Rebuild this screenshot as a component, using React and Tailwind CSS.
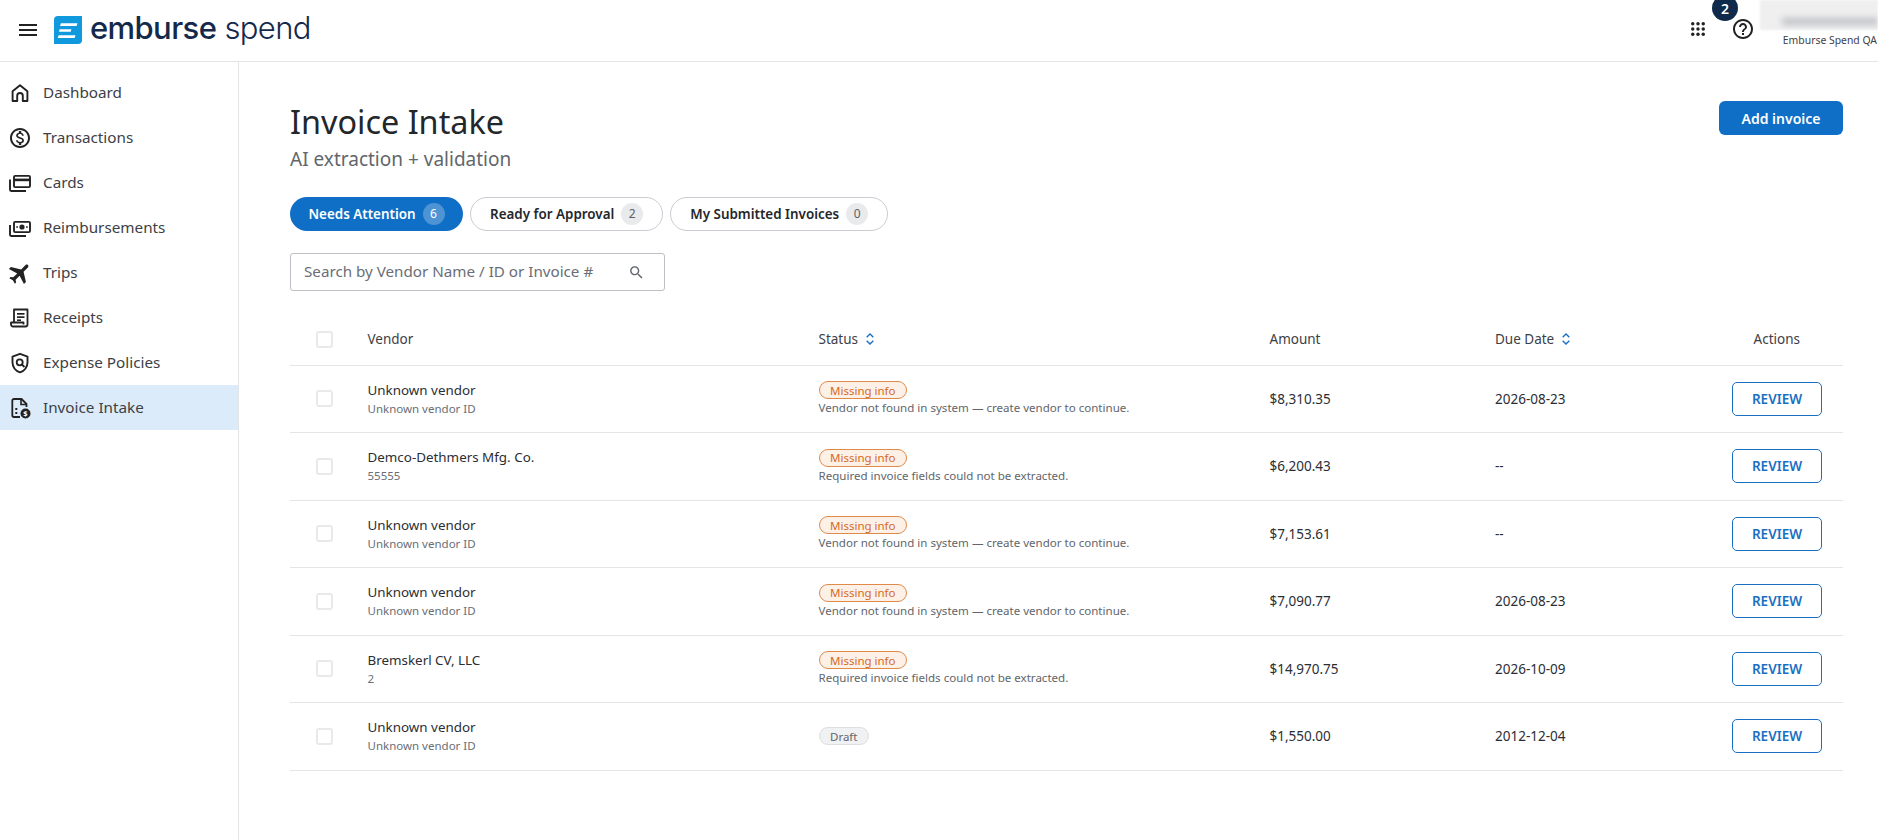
import { useState } from "react"

const font = { fontFamily: '"Noto Sans", sans-serif' }

const rows = [
  { vendor: "Unknown vendor", id: "Unknown vendor ID", status: "Missing info", note: "Vendor not found in system — create vendor to continue.", amount: "$8,310.35", due: "2026-08-23" },
  { vendor: "Demco-Dethmers Mfg. Co.", id: "55555", status: "Missing info", note: "Required invoice fields could not be extracted.", amount: "$6,200.43", due: "--" },
  { vendor: "Unknown vendor", id: "Unknown vendor ID", status: "Missing info", note: "Vendor not found in system — create vendor to continue.", amount: "$7,153.61", due: "--" },
  { vendor: "Unknown vendor", id: "Unknown vendor ID", status: "Missing info", note: "Vendor not found in system — create vendor to continue.", amount: "$7,090.77", due: "2026-08-23" },
  { vendor: "Bremskerl CV, LLC", id: "2", status: "Missing info", note: "Required invoice fields could not be extracted.", amount: "$14,970.75", due: "2026-10-09" },
  { vendor: "Unknown vendor", id: "Unknown vendor ID", status: "Draft", note: "", amount: "$1,550.00", due: "2012-12-04" },
]

/* ---------------- Icons ---------------- */
function Icon({ children, className = "w-6 h-6" }) {
  return (
    <svg viewBox="0 0 24 24" className={className} fill="#222" aria-hidden="true">
      {children}
    </svg>
  )
}

const HomeIcon = () => (
  <Icon>
    <path d="M4.6 20V10.2L12 4.2l7.4 6V20h-4.6v-5.2a2.8 2.8 0 0 0-5.6 0V20z" fill="none" stroke="#222" strokeWidth="1.9" strokeLinejoin="round" />
  </Icon>
)
const DollarIcon = () => (
  <Icon>
    <path d="M12 2C6.48 2 2 6.48 2 12s4.48 10 10 10 10-4.48 10-10S17.52 2 12 2zm0 18c-4.41 0-8-3.59-8-8s3.59-8 8-8 8 3.59 8 8-3.59 8-8 8zm.31-8.86c-1.77-.45-2.34-.94-2.34-1.67 0-.84.79-1.43 2.1-1.43 1.38 0 1.9.66 1.94 1.64h1.71c-.05-1.34-.87-2.57-2.49-2.97V5H10.9v1.69c-1.51.32-2.72 1.3-2.72 2.81 0 1.79 1.49 2.69 3.66 3.21 1.95.46 2.34 1.15 2.34 1.87 0 .53-.39 1.39-2.1 1.39-1.6 0-2.23-.72-2.32-1.64H8.04c.1 1.7 1.36 2.66 2.86 2.97V19h2.34v-1.67c1.52-.29 2.72-1.16 2.73-2.77-.01-2.2-1.9-2.96-3.66-3.42z" />
  </Icon>
)
const CardsIcon = () => (
  <Icon>
    <path d="M2 8.5v10.3c0 .7.5 1.2 1.2 1.2H18" fill="none" stroke="#222" strokeWidth="1.9" />
    <rect x="6" y="4.9" width="16" height="11.2" rx="1.2" fill="none" stroke="#222" strokeWidth="1.9" />
    <rect x="6" y="7.6" width="16" height="2.6" />
  </Icon>
)
const CashIcon = () => (
  <Icon>
    <path d="M2 9v9.8c0 .7.5 1.2 1.2 1.2H18" fill="none" stroke="#222" strokeWidth="1.9" />
    <rect x="6" y="5.9" width="16" height="10.2" rx="1.2" fill="none" stroke="#222" strokeWidth="1.9" />
    <circle cx="14" cy="11" r="2.6" />
    <rect x="8.3" y="10.2" width="1.6" height="1.6" />
    <rect x="18.1" y="10.2" width="1.6" height="1.6" />
  </Icon>
)
const FlightIcon = () => (
  <Icon>
    <path transform="rotate(45 12 12) translate(12 12) scale(1.12 1.12) translate(-12 -12)" d="M21.5 16.5V14l-8-5V3.5C13.5 2.67 12.83 2 12 2s-1.5.67-1.5 1.5V9l-8 5v2.5l8-2.5v5l-2 1.5V22l3.500-1 3.500 1v-1.500l-2-1.500v-5z" />
  </Icon>
)
const ReceiptIcon = () => (
  <Icon>
    <path d="M6 16.5V3.5h13.5V18.5a2 2 0 0 1-2 2H5a2 2 0 0 1-2-2v-2h12.5v2" fill="none" stroke="#222" strokeWidth="1.8" strokeLinejoin="round" />
    <rect x="9" y="7" width="7.5" height="1.7" />
    <rect x="9" y="10.3" width="7.5" height="1.7" />
    <rect x="9" y="13.4" width="4" height="1.6" />
  </Icon>
)
const PolicyIcon = () => (
  <Icon>
    <path d="M12 2.8 4.5 5.6v5.9c0 4.6 3.1 8.7 7.5 9.8 4.4-1.1 7.5-5.2 7.5-9.8V5.6z" fill="none" stroke="#222" strokeWidth="1.9" strokeLinejoin="round" />
    <circle cx="11.7" cy="11.3" r="3" fill="none" stroke="#222" strokeWidth="1.8" />
    <path d="M13.8 13.5 16.5 16" stroke="#222" strokeWidth="1.8" fill="none" />
  </Icon>
)
const InvoiceIcon = () => (
  <Icon>
    <path d="M12 21H6a1.7 1.7 0 0 1-1.7-1.7V4.7A1.7 1.7 0 0 1 6 3h7.5l5 5v3" fill="none" stroke="#222" strokeWidth="1.8" strokeLinejoin="round" />
    <path d="M13 3.5v5h5" fill="none" stroke="#222" strokeWidth="1.6" />
    <rect x="7.3" y="12" width="2" height="2" />
    <rect x="7.3" y="16" width="2" height="2" />
    <circle cx="17.5" cy="17.5" r="5" />
    <text x="17.5" y="20.2" textAnchor="middle" fontSize="7.5" fontWeight="700" fill="#fff" style={font}>$</text>
  </Icon>
)

function SortIcon() {
  return (
    <svg viewBox="0 0 12 16" className="w-[10px] h-[14px] ml-[7px]" fill="none" stroke="#1b6fc2" strokeWidth="1.6">
      <path d="M2 6l4-4 4 4" />
      <path d="M2 10l4 4 4-4" />
    </svg>
  )
}

/* ---------------- Sidebar ---------------- */
const navItems = [
  ["Dashboard", HomeIcon],
  ["Transactions", DollarIcon],
  ["Cards", CardsIcon],
  ["Reimbursements", CashIcon],
  ["Trips", FlightIcon],
  ["Receipts", ReceiptIcon],
  ["Expense Policies", PolicyIcon],
  ["Invoice Intake", InvoiceIcon],
]

function Sidebar() {
  return (
    <aside className="w-[239px] shrink-0 border-r border-[#e3e5e8] pt-2">
      {navItems.map(([label, NavIcon]) => (
        <div
          key={label}
          className={
            "h-[45px] flex items-center pl-[8px] gap-[11px] text-[15.25px] text-[#3d4046] " +
            (label === "Invoice Intake" ? "bg-[#dcebf9]" : "")
          }
        >
          <NavIcon />
          <span className="mb-[1px]">{label}</span>
        </div>
      ))}
    </aside>
  )
}

/* ---------------- Header ---------------- */
function Header() {
  return (
    <header className="h-[62px] shrink-0 border-b border-[#e3e5e8] flex items-center relative">
      <svg viewBox="0 0 24 24" className="w-6 h-6 ml-[16px] mb-[1px]" fill="#222">
        <path d="M3 18h18v-2H3v2zm0-5h18v-2H3v2zm0-7v2h18V6H3z" />
      </svg>
      <svg viewBox="0 0 28 28" className="w-[28px] h-[28px] ml-[14px] mb-[2px]">
        <path d="M4 0h24v24a4 4 0 0 1-4 4H0V4a4 4 0 0 1 4-4z" fill="#1199dd" />
        <path d="M7 7.2h16.5l-.9 2.8H6zM5.7 13.3h11.7l-.7 2.4H4.9zM4.7 19.3h16.8l-.9 2.7H3.7z" fill="#fff" />
      </svg>
      <div className="ml-[8px] text-[31px] leading-none text-[#14294b] tracking-[-0.6px] pb-[7px]" style={{ fontFamily: '"Inter", sans-serif' }}>
        <span className="font-medium">emburse</span> <span className="font-light">spend</span>
      </div>

      <div className="ml-auto flex items-center h-full">
        <svg viewBox="0 0 24 24" className="w-[18px] h-[18px] mr-[24px] mb-[4px]" fill="#222">
          {[5, 12, 19].flatMap((y) => [5, 12, 19].map((x) => <circle key={x + "-" + y} cx={x} cy={y} r="2.3" />))}
        </svg>
        <svg viewBox="0 0 24 24" className="w-[24px] h-[24px] mr-[5px] mb-[4px]" fill="#222">
          <path d="M11 18h2v-2h-2v2zm1-16C6.48 2 2 6.48 2 12s4.48 10 10 10 10-4.48 10-10S17.52 2 12 2zm0 18c-4.41 0-8-3.59-8-8s3.59-8 8-8 8 3.59 8 8-3.59 8-8 8zm0-14c-2.21 0-4 1.79-4 4h2c0-1.1.9-2 2-2s2 .9 2 2c0 2-3 1.75-3 5h2c0-2.25 3-2.5 3-5 0-2.21-1.79-4-4-4z" />
        </svg>
        <div className="w-[118px] h-full flex flex-col items-end">
          <div className="w-[118px] h-[30px] bg-[#efeff0] blur-[1px] flex items-end justify-end overflow-hidden">
            <div className="w-[96px] h-[7px] mb-[5px] bg-[#bfc1c4] blur-[3px]" />
          </div>
          <div className="text-[10.4px] text-[#3d4046] leading-none mt-[5px] pr-[1px]">Emburse Spend QA</div>
        </div>
      </div>
      <div className="absolute left-[1712px] top-[-5px] w-[26px] h-[26px] rounded-full bg-[#0f2a4a] text-white text-[14px] font-semibold flex items-center justify-center">
        2
      </div>
    </header>
  )
}

/* ---------------- Tabs ---------------- */
function Tab({ label, count, active, onClick }) {
  return (
    <button
      onClick={onClick}
      className={
        "h-[34px] rounded-full flex items-center gap-[7px] text-[13.4px] font-semibold " +
        (active ? "bg-[#0f6fc6] text-white px-[18.5px]" : "bg-white border border-[#c9ccd1] text-[#23262b] px-[19px]")
      }
    >
      {label}
      <span
        className={
          "w-[22px] h-[22px] rounded-full flex items-center justify-center text-[12px] font-normal " +
          (active ? "bg-[#4e93d4] text-white" : "bg-[#e9eaec] text-[#5c6067]")
        }
      >
        {count}
      </span>
    </button>
  )
}

const cols = "grid grid-cols-[77.5px_451px_451px_225.5px_1fr] items-center"

function Checkbox() {
  return <div className="ml-[26px] w-[17px] h-[17px] rounded-[3px] border-2 border-[#e8e9eb] bg-white" />
}

function Row({ row }) {
  const missing = row.status === "Missing info"
  return (
    <div className={cols + " h-[67.5px] border-b border-[#e3e5e8]"}>
      <Checkbox />
      <div>
        <div className="text-[13.4px] leading-[19px] text-[#2b2e33]">{row.vendor}</div>
        <div className="text-[11.5px] leading-[16px] mt-[1px] text-[#6a6e75]">{row.id}</div>
      </div>
      <div>
        <span
          className={
            "flex w-fit items-center h-[18px] px-[10.5px] rounded-full border text-[11.5px] leading-none " +
            (missing
              ? "border-[#e08a4a] bg-[#fdf1e7] text-[#d4691f]"
              : "border-[#dddee0] bg-[#f0f1f2] text-[#62666c]")
          }
        >
          {row.status}
        </span>
        {row.note && <div className="text-[11.55px] leading-[16px] mt-[1px] text-[#62666c]">{row.note}</div>}
      </div>
      <div className="text-[13.5px] text-[#2b2e33]">{row.amount}</div>
      <div className="flex items-center">
        <span className="text-[13.5px] text-[#2b2e33]">{row.due}</span>
        <button className="ml-auto mr-[21px] w-[90px] h-[34px] rounded-[5px] border border-[#1b6fc2] text-[#1b6fc2] text-[13.5px] font-semibold">
          REVIEW
        </button>
      </div>
    </div>
  )
}

/* ---------------- App ---------------- */
export default function App() {
  const [tab, setTab] = useState("attention")

  return (
    <div className="w-[1878px] h-[840px] bg-white flex flex-col overflow-hidden" style={font}>
      <Header />
      <div className="flex flex-1 min-h-0">
        <Sidebar />
        <main className="flex-1 pl-[51px] pr-[35px] pt-[38px]">
          <div className="flex justify-between items-start">
            <div>
              <h1 className="text-[32.4px] leading-[42px] text-[#23262b]">Invoice Intake</h1>
              <p className="text-[19px] leading-[25px] mt-[5px] text-[#62666c]">AI extraction + validation</p>
            </div>
            <button className="w-[124px] h-[34px] mt-[1px] rounded-[6px] bg-[#0f6fc6] text-white text-[14px] font-semibold">
              Add invoice
            </button>
          </div>

          <div className="flex gap-[7px] mt-[25px]">
            <Tab label="Needs Attention" count="6" active={tab === "attention"} onClick={() => setTab("attention")} />
            <Tab label="Ready for Approval" count="2" active={tab === "ready"} onClick={() => setTab("ready")} />
            <Tab label="My Submitted Invoices" count="0" active={tab === "mine"} onClick={() => setTab("mine")} />
          </div>

          <div className="mt-[22px] w-[375px] h-[38px] rounded-[3px] border border-[#bcbfc4] flex items-center pl-[13px] pr-[19px]">
            <span className="text-[15.2px] mb-[1px] text-[#6a6e75]">Search by Vendor Name / ID or Invoice #</span>
            <svg viewBox="0 0 24 24" className="w-[17px] h-[17px] ml-auto" fill="#62666c">
              <path d="M15.5 14h-.79l-.28-.27C15.41 12.59 16 11.11 16 9.5 16 5.91 13.09 3 9.5 3S3 5.91 3 9.5 5.91 16 9.5 16c1.61 0 3.09-.59 4.23-1.57l.27.28v.79l5 4.99L20.49 19l-4.99-5zm-6 0C7.01 14 5 11.99 5 9.5S7.01 5 9.5 5 14 7.01 14 9.5 11.99 14 9.5 14z" />
            </svg>
          </div>

          <div className="mt-[23px]">
            <div className={cols + " h-[51.5px] border-b border-[#e3e5e8] text-[13.5px] text-[#3d4046]"}>
              <Checkbox />
              <div>Vendor</div>
              <div className="flex items-center">Status<SortIcon /></div>
              <div>Amount</div>
              <div className="flex items-center">
                Due Date<SortIcon />
                <span className="ml-auto mr-[43px]">Actions</span>
              </div>
            </div>
            {rows.map((row, i) => (
              <Row key={i} row={row} />
            ))}
          </div>
        </main>
      </div>
    </div>
  )
}
